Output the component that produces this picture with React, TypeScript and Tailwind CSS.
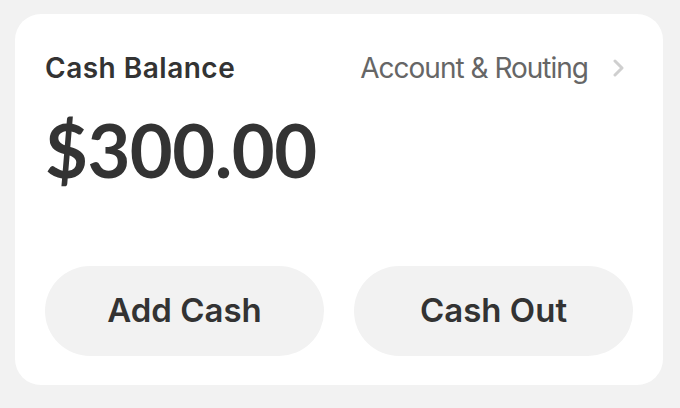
export default function App() {
  const font = { fontFamily: 'Inter, "Noto Sans", sans-serif' };

  return (
    <div className="w-[680px] h-[408px] bg-[#f2f2f2] pt-[14px] pl-[15px]" style={font}>
      <div className="w-[648px] h-[371px] bg-white rounded-[26px] px-[30px] pt-[36px] flex flex-col">
        {/* Header */}
        <div className="flex items-center justify-between h-[36px]">
          <span className="text-[28px] font-semibold text-[#333333] tracking-[0.5px]">Cash Balance</span>
          <div className="flex items-center gap-[25px] pr-[9px]">
            <span className="text-[28px] text-[#666666] tracking-[-1px]">Account &amp; Routing</span>
            <svg width="11" height="18" viewBox="0 0 11 18" fill="none">
              <polyline points="2,2 9,9 2,16" stroke="#cfcfcf" strokeWidth="3" strokeLinecap="round" strokeLinejoin="round" />
            </svg>
          </div>
        </div>

        {/* Balance */}
        <div
          className="mt-[24px] text-[74px] leading-[80px] font-bold text-[#333333] tracking-[-0.5px]"
          style={{ fontFamily: 'Lato, sans-serif' }}
        >
          $300.00
        </div>

        {/* Actions */}
        <div className="mt-auto mb-[29px] grid grid-cols-2 gap-[30px]">
          <button className="h-[90px] rounded-full bg-[#f2f2f2] text-[33px] font-semibold text-[#333333]">Add Cash</button>
          <button className="h-[90px] rounded-full bg-[#f2f2f2] text-[33px] font-semibold text-[#333333]">Cash Out</button>
        </div>
      </div>
    </div>
  );
}
